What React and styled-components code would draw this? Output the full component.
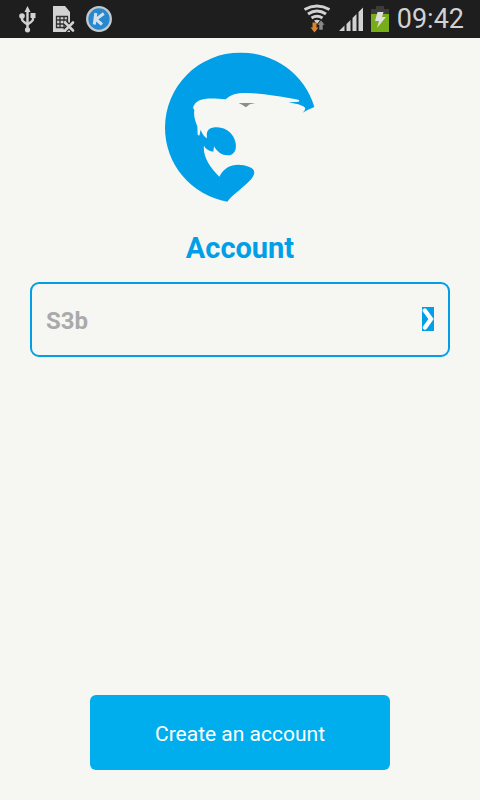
import React from "react";
import styled, { createGlobalStyle } from "styled-components";

const GlobalStyle = createGlobalStyle`
  * { box-sizing: border-box; }
  body {
    margin: 0;
    background: #f6f7f2;
    font-family: Roboto, "Noto Sans", sans-serif;
  }
`;

const Screen = styled.div`
  display: flex;
  flex-direction: column;
  min-height: 100vh;
`;

const StatusBar = styled.header`
  display: flex;
  align-items: center;
  justify-content: space-between;
  height: 38px;
  padding: 0 16px;
  background: #1e1e1e;
  color: #d2d2d2;
`;

const StatusGroup = styled.div`
  display: flex;
  align-items: center;
  gap: ${({ $gap }) => $gap}px;
`;

const Clock = styled.time`
  font-size: 27px;
  line-height: 38px;
`;

const StatusIcon = styled.svg`
  display: block;
  flex: none;
`;

const Content = styled.main`
  display: flex;
  flex: 1;
  flex-direction: column;
  align-items: center;
  padding: 7px 30px 30px;
`;

const Logo = styled.svg`
  display: block;
  width: 170px;
  height: 165px;
`;

const Title = styled.h1`
  margin: 20px 0 16px;
  color: #009fe8;
  font-size: 29px;
  line-height: 36px;
  font-weight: 700;
`;

const AccountRow = styled.button`
  display: flex;
  align-items: center;
  justify-content: space-between;
  width: 100%;
  height: 75px;
  padding: 0 14px 1px;
  border: 2px solid #009fe8;
  border-radius: 9px;
  background: transparent;
  color: #aaaaaa;
  font: 700 24px/30px Roboto, "Noto Sans", sans-serif;
  cursor: pointer;
`;

const AccountName = styled.span`
  padding-top: 3px;
`;

const CreateButton = styled.button`
  width: 100%;
  max-width: 300px;
  height: 75px;
  margin-top: auto;
  padding: 2px 0 0;
  border: 0;
  border-radius: 6px;
  background: #00aeed;
  color: #ffffff;
  font: 400 21px/28px Roboto, "Noto Sans", sans-serif;
  cursor: pointer;
`;

function UsbIcon() {
  return (
    <StatusIcon width="24" height="30" viewBox="0 0 24 30" aria-label="USB" role="img">
      <g fill="none" stroke="#d2d2d2" strokeWidth="2.400" strokeLinejoin="round">
        <path d="M11.500 5V26" />
        <path d="M6 11v4q0 2 2 3l3.500 2.500" />
        <path d="M17 11v4q0 2-2 3l-3.500 2.500" />
      </g>
      <g fill="#d2d2d2">
        <path d="M11.500 2l3 6h-6z" />
        <circle cx="6" cy="12" r="2.800" />
        <path d="M14.500 9h5v5h-5z" />
        <circle cx="11.500" cy="25.800" r="2.600" />
      </g>
    </StatusIcon>
  );
}

function SimIcon() {
  return (
    <StatusIcon width="24" height="30" viewBox="0 0 24 30" aria-label="No SIM" role="img">
      <path d="M2 2h12l5 6v20H2z" fill="#d2d2d2" />
      <path d="M5.500 12.500h11v11h-11zM9 12v12M13 12v12M5 16h11M5 20h11" fill="none" stroke="#303030" strokeWidth="1.300" />
      <path d="M14 18.500l8 8M22 18.500l-8 8" stroke="#1e1e1e" strokeWidth="5" />
      <path d="M14 18.500l8 8M22 18.500l-8 8" stroke="#d2d2d2" strokeWidth="2.600" strokeLinecap="round" />
    </StatusIcon>
  );
}

function KIcon() {
  return (
    <StatusIcon width="26" height="30" viewBox="0 0 26 30" aria-label="K" role="img">
      <circle cx="13" cy="15" r="11.800" fill="#2689d0" stroke="#c3c8cb" strokeWidth="2.300" />
      <path d="M9.800 9L8.300 20.500M17.800 9.500L10 15.300L16 20.500" fill="none" stroke="#d5e0e8" strokeWidth="3" />
    </StatusIcon>
  );
}

function WifiIcon() {
  return (
    <StatusIcon width="28" height="32" viewBox="0 0 28 32" aria-label="Wi-Fi" role="img">
      <g fill="none" stroke="#d2d2d2" strokeWidth="3">
        <path d="M1.500 6.500q12.500-7 25 0" />
        <path d="M5 11q9-6 18 0" />
        <path d="M8.500 15q5.500-3.500 11 0" />
      </g>
      <path d="M11 17.500q3-1.500 6 0L14 21z" fill="#d2d2d2" />
      <path d="M9.500 19.500h4v5h2l-4 5-4-5h2z" fill="#dc8424" />
      <path d="M18 17l4 5h-2v5h-4v-5h-2z" fill="#888888" stroke="#1e1e1e" strokeWidth=".5" />
    </StatusIcon>
  );
}

function SignalIcon() {
  return (
    <StatusIcon width="24" height="26" viewBox="0 0 24 26" aria-label="Signal" role="img">
      <path d="M0 25L5.500 19.500V25zM7.500 25v-7l4-4v11zM13.500 25V12l4-4v17zM19.500 25V6L24 1.500V25z" fill="#d2d2d2" />
    </StatusIcon>
  );
}

function BatteryIcon() {
  return (
    <StatusIcon width="18" height="26" viewBox="0 0 18 26" aria-label="Battery charging" role="img">
      <path d="M5 0h8v3h5v6H0V3h5z" fill="#3c3c3c" />
      <path d="M0 8h18v18H0z" fill="#77ad17" />
      <path d="M6.500 6h6l-1.500 5h4L6 22l2-7H4z" fill="#dedede" />
    </StatusIcon>
  );
}

function PantherLogo() {
  return (
    <Logo viewBox="0 0 510 495" role="img" aria-label="Panther logo">
      <path
        fill="#009fe8"
        d="M478 186A228 228 0 0 0 255 23
          A225 225 0 0 0 30 248
          A225 225 0 0 0 217 470
          C235 446 264 429 287 404
          C303 386 301 373 283 366
          C248 353 212 358 193 395
          C163 366 143 332 147 302
          Q153 316 175 320L177 304
          C186 321 202 331 217 331
          C239 331 245 313 242 294
          C236 266 215 248 187 247
          C160 247 153 257 156 280
          Q144 273 137 254L133 272L128 269L127 244
          C118 223 116 209 118 194
          Q111 188 118 179
          C132 157 169 159 212 163
          C229 146 250 143 280 144
          C326 145 371 154 430 164
          Q438 170 425 171L400 172
          C421 176 437 178 449 187
          Q454 193 443 203Q460 193 478 186Z"
      />
      <path d="M251 174H301L284 178L273 187L261 179Z" fill="#8b8d8a" />
    </Logo>
  );
}

function Chevron() {
  return (
    <svg width="12" height="24" viewBox="0 0 12 24" aria-hidden="true">
      <path d="M0 0h12v24H0z" fill="#009fe8" />
      <path d="M2.800 3.500L9 12L3 20.500" fill="none" stroke="#ffffff" strokeWidth="4.400" strokeLinecap="round" />
    </svg>
  );
}

export default function App() {
  return (
    <>
      <GlobalStyle />
      <Screen>
        <StatusBar>
          <StatusGroup $gap={11}>
            <UsbIcon />
            <SimIcon />
            <KIcon />
          </StatusGroup>
          <StatusGroup $gap={8}>
            <WifiIcon />
            <SignalIcon />
            <BatteryIcon />
            <Clock dateTime="09:42">09:42</Clock>
          </StatusGroup>
        </StatusBar>
        <Content>
          <PantherLogo />
          <Title>Account</Title>
          <AccountRow type="button">
            <AccountName>S3b</AccountName>
            <Chevron />
          </AccountRow>
          <CreateButton type="button">Create an account</CreateButton>
        </Content>
      </Screen>
    </>
  );
}
